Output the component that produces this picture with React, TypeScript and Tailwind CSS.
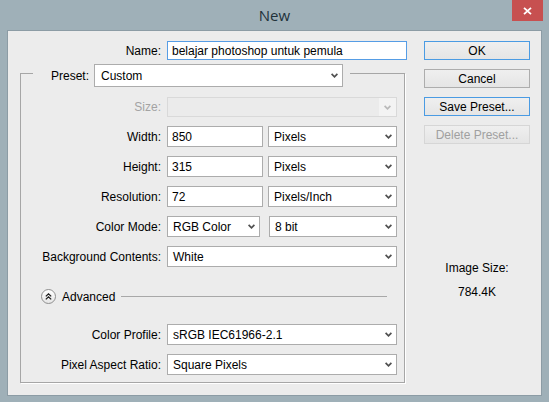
import React from "react";

// ─── Small drawings ───────────────────────────────────────────────────────────

function Chevron({ disabled }: { disabled?: boolean }) {
  return (
    <svg width="7" height="5" viewBox="0 0 7 5" className="shrink-0">
      <path
        d="M0.6 0.8 L3.5 3.8 L6.4 0.8"
        fill="none"
        stroke={disabled ? "#b9b9b9" : "#505050"}
        strokeWidth="1.7"
      />
    </svg>
  );
}

function AdvancedToggle() {
  return (
    <span className="flex h-[15px] w-[15px] shrink-0 items-center justify-center rounded-full border border-[#8f8f8f] bg-gradient-to-b from-white to-[#e6e6e6]">
      <svg width="9" height="9" viewBox="0 0 9 9">
        <path
          d="M1.8 4.4 L4.5 1.8 L7.2 4.4 M1.8 7.4 L4.5 4.8 L7.2 7.4"
          fill="none"
          stroke="#1e1e1e"
          strokeWidth="1.3"
        />
      </svg>
    </span>
  );
}

// ─── Controls ─────────────────────────────────────────────────────────────────

function Field({ value, w }: { value: string; w: string }) {
  return (
    <div
      className={`${w} flex h-[21px] items-center border border-[#acacac] bg-white pl-[4px] text-black`}
    >
      {value}
    </div>
  );
}

function Select({ value, w, disabled }: { value?: string; w: string; disabled?: boolean }) {
  if (disabled) {
    return (
      <div className={`${w} flex h-[20px] items-stretch border border-[#d9d9d9] bg-[#ebebeb]`}>
        <div className="flex-1" />
        <div className="flex w-[17px] items-center justify-center bg-[#f3f3f3]">
          <Chevron disabled />
        </div>
      </div>
    );
  }
  return (
    <div
      className={`${w} flex h-[21px] items-center justify-between border border-[#acacac] bg-white pl-[5px] pr-[4px] text-black`}
    >
      <span>{value}</span>
      <Chevron />
    </div>
  );
}

function Row({ label, muted, children }: { label: string; muted?: boolean; children: React.ReactNode }) {
  return (
    <div className="flex items-center gap-[6px]">
      <span className={`w-[140px] text-right ${muted ? "text-[#a3a3a3]" : "text-black"}`}>{label}</span>
      {children}
    </div>
  );
}

function Button({
  label,
  tone = "normal",
}: {
  label: string;
  tone?: "normal" | "focus" | "disabled";
}) {
  const border =
    tone === "focus"
      ? "border-[#4a9be3]"
      : tone === "disabled"
        ? "border-[#d6d6d6]"
        : "border-[#adadad]";
  const text = tone === "disabled" ? "text-[#a0a0a0]" : "text-black";
  return (
    <div
      className={`flex h-[19px] items-center justify-center border bg-gradient-to-b from-[#efefef] to-[#e5e5e5] ${border} ${text}`}
    >
      {label}
    </div>
  );
}

// ─── Dialog ───────────────────────────────────────────────────────────────────

export default function App() {
  return (
    <div className="flex h-[402px] w-[549px] flex-col bg-[#9fb0b8] font-['Liberation_Sans',Arial,sans-serif] text-[12px] leading-[14px]">
      {/* Title bar */}
      <div className="relative flex h-[30px] shrink-0 items-start">
        <div className="flex h-[29px] flex-1 items-center justify-center font-['Open_Sans',sans-serif] text-[15px] text-[#22323b]">
          New
        </div>
        <div className="absolute right-[6px] top-0 flex h-[21px] w-[31px] items-center justify-center bg-[#c75050]">
          <svg width="9" height="8" viewBox="0 0 9 8">
            <path d="M1 0.8 L8 7.2 M8 0.8 L1 7.2" stroke="#ffffff" strokeWidth="1.8" />
          </svg>
        </div>
      </div>

      {/* Client area */}
      <div className="mx-[7px] mb-[6px] flex flex-1 border border-[#8c9ca5] bg-[#ececec] pl-[12px] pt-[10px]">
        {/* Left column */}
        <div className="flex w-[404px] flex-col">
          <div className="flex items-center gap-[6px]">
            <span className="w-[141px] text-right text-black">Name:</span>
            <div className="flex h-[19px] w-[240px] items-center border border-[#569de5] bg-white pl-[4px] text-black">
              belajar photoshop untuk pemula
            </div>
          </div>

          <fieldset className="m-0 w-[385px] border border-[#a6a6a6] p-0 shadow-[1px_1px_0_0_#ffffff]">
            <legend className="ml-[12px] flex items-center gap-[5px] pb-0 pl-[18px] pr-[7px] pt-[4px]">
              <span className="text-black">Preset:</span>
              <div className="flex h-[23px] w-[249px] items-center justify-between border border-[#acacac] bg-white pl-[6px] pr-[4px] text-black">
                <span>Custom</span>
                <Chevron />
              </div>
            </legend>

            <div className="flex flex-col pb-[7px] pt-[10px]">
              <div className="flex flex-col gap-[9px]">
                <Row label="Size:" muted>
                  <Select w="w-[230px]" disabled />
                </Row>
                <Row label="Width:">
                  <Field value="850" w="w-[96px]" />
                  <div className="ml-[-1px]">
                    <Select value="Pixels" w="w-[129px]" />
                  </div>
                </Row>
                <Row label="Height:">
                  <Field value="315" w="w-[96px]" />
                  <div className="ml-[-1px]">
                    <Select value="Pixels" w="w-[129px]" />
                  </div>
                </Row>
                <Row label="Resolution:">
                  <Field value="72" w="w-[96px]" />
                  <div className="ml-[-1px]">
                    <Select value="Pixels/Inch" w="w-[129px]" />
                  </div>
                </Row>
                <Row label="Color Mode:">
                  <Select value="RGB Color" w="w-[93px]" />
                  <div className="ml-[3px]">
                    <Select value="8 bit" w="w-[128px]" />
                  </div>
                </Row>
                <Row label="Background Contents:">
                  <Select value="White" w="w-[230px]" />
                </Row>
              </div>

              {/* Advanced toggle */}
              <div className="mr-[17px] mt-[22px] flex items-center pl-[20px]">
                <AdvancedToggle />
                <span className="ml-[6px] text-black">Advanced</span>
                <div className="ml-[6px] h-px flex-1 bg-[#a8a8a8]" />
              </div>

              <div className="mt-[20px] flex flex-col gap-[9px]">
                <Row label="Color Profile:">
                  <Select value="sRGB IEC61966-2.1" w="w-[230px]" />
                </Row>
                <Row label="Pixel Aspect Ratio:">
                  <Select value="Square Pixels" w="w-[230px]" />
                </Row>
              </div>
            </div>
          </fieldset>
        </div>

        {/* Right column */}
        <div className="flex w-[106px] flex-col">
          <div className="flex flex-col gap-[9px]">
            <Button label="OK" tone="focus" />
            <Button label="Cancel" />
            <Button label="Save Preset..." tone="focus" />
            <Button label="Delete Preset..." tone="disabled" />
          </div>
          <div className="mt-[117px] flex flex-col items-center gap-[10px] text-black">
            <span>Image Size:</span>
            <span>784.4K</span>
          </div>
        </div>
      </div>
    </div>
  );
}
